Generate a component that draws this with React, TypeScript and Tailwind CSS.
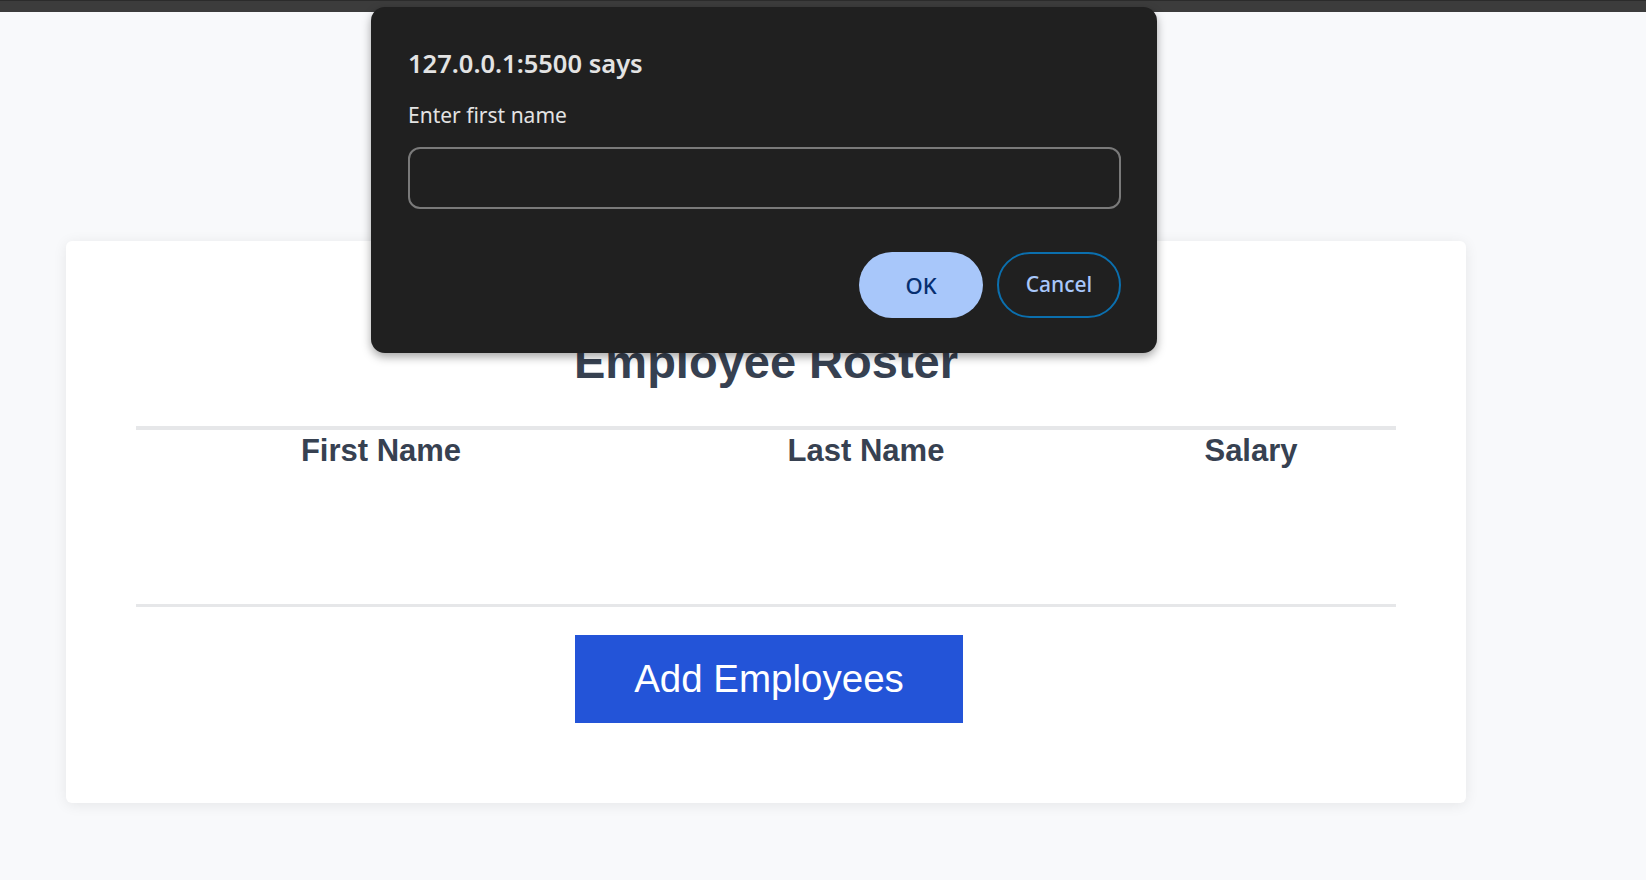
const columns = ["First Name", "Last Name", "Salary"];

function PromptDialog() {
  return (
    <div className="absolute left-[371px] top-[7px] w-[786px] rounded-[14px] bg-[#202020] pl-[37px] pr-[36px] pt-[39px] pb-[35px] font-['Noto_Sans',sans-serif] shadow-[0_4px_10px_rgba(0,0,0,0.35)]">
      <div className="text-[25.5px] leading-[34px] font-semibold text-[#e3e3e3]">
        127.0.0.1:5500 says
      </div>
      <div className="mt-[21px] text-[21px] leading-[28px] text-[#e3e3e3]">Enter first name</div>
      <input
        type="text"
        className="mt-[18px] block h-[62px] w-full rounded-[12px] border-2 border-[#7a7a7a] bg-transparent px-4 text-[21px] text-[#e3e3e3] outline-none"
      />
      <div className="mt-[43px] flex justify-end gap-[14px]">
        <button className="h-[66px] w-[124px] rounded-full bg-[#a8c7fa] text-[22px] font-medium text-[#062e6f]">
          OK
        </button>
        <button className="h-[66px] w-[124px] rounded-full border-2 border-[#0b6fae] text-[21px] font-medium text-[#a8c7fa]">
          Cancel
        </button>
      </div>
    </div>
  );
}

export default function App() {
  return (
    <div className="relative min-h-screen bg-[#f8f9fb] pb-[77px] font-['Liberation_Sans',Arial,sans-serif]">
      {/* browser chrome strip */}
      <div className="h-3 border-t border-[#2b2b2b] bg-[#3c3c3c]" />

      <section className="ml-[66px] mt-[229px] w-[1400px] rounded-md bg-white px-[70px] pb-[80px] pt-[94px] shadow-[0_2px_14px_rgba(0,0,0,0.08)]">
        <h1 className="text-center text-[47px] leading-[54px] font-bold text-[#374151]">Employee Roster</h1>

        <div className="mt-[37px] border-t-4 border-[#e6e7e9]">
          <div className="grid grid-cols-[490px_480px_290px] pt-[3px]">
            {columns.map((c) => (
              <div key={c} className="text-center text-[31px] leading-[36px] font-bold text-[#374151]">
                {c}
              </div>
            ))}
          </div>
          <div className="h-[135px]" />
        </div>

        <div className="h-[3px] bg-[#e6e7e9]" />

        <div className="mt-[28px] flex justify-center pl-[6px]">
          <button className="h-[88px] w-[388px] bg-[#2354d8] text-[38.5px] text-white">Add Employees</button>
        </div>
      </section>

      <PromptDialog />
    </div>
  );
}
